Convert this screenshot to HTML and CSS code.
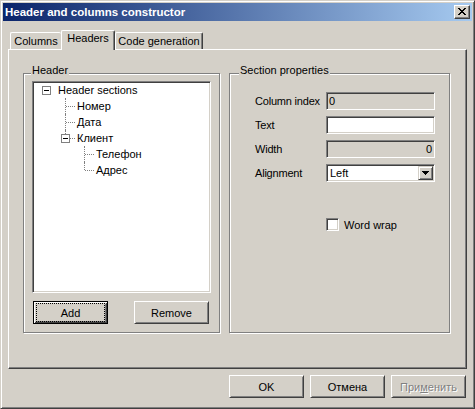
FILE: index.html
```html
<!DOCTYPE html>
<html>
<head>
<meta charset="utf-8">
<link rel="stylesheet" href="styles.css">
</head>
<body>
<div class="window">
  <div class="titlebar">
    <span class="title">Header and columns constructor</span>
    <div class="close">
      <svg width="8" height="7" viewBox="0 0 8 7" shape-rendering="crispEdges"><path d="M0 0h2v1H0zM6 0h2v1H6zM1 1h2v1H1zM5 1h2v1H5zM2 2h4v1H2zM3 3h2v1H3zM2 4h4v1H2zM1 5h2v1H1zM5 5h2v1H5zM0 6h2v1H0zM6 6h2v1H6z" fill="#000"/></svg>
    </div>
  </div>
  <div class="tabs">
    <div class="tab tab-first">Columns</div>
    <div class="tab tab-sel">Headers</div>
    <div class="tab tab-last">Code generation</div>
  </div>
  <div class="panel">
    <div class="group group-header">
      <span class="group-title">Header</span>
      <div class="tree">
        <div class="row"><span class="cell"><span class="box"></span></span><span class="label">Header sections</span></div>
        <div class="row"><span class="cell"></span><span class="cell tee"></span><span class="label">Номер</span></div>
        <div class="row"><span class="cell"></span><span class="cell tee"></span><span class="label">Дата</span></div>
        <div class="row"><span class="cell"></span><span class="cell end"><span class="box"></span></span><span class="label">Клиент</span></div>
        <div class="row"><span class="cell"></span><span class="cell"></span><span class="cell tee"></span><span class="label">Телефон</span></div>
        <div class="row"><span class="cell"></span><span class="cell"></span><span class="cell end"></span><span class="label">Адрес</span></div>
      </div>
      <div class="btnrow">
        <div class="btn btn-default"><span class="focus">Add</span></div>
        <div class="btn">Remove</div>
      </div>
    </div>
    <div class="group group-props">
      <span class="group-title">Section properties</span>
      <div class="fields">
        <span class="flabel">Column index</span>
        <div class="edit edit-disabled">0</div>
        <span class="flabel">Text</span>
        <div class="edit"></div>
        <span class="flabel">Width</span>
        <div class="edit edit-disabled edit-right">0</div>
        <span class="flabel">Alignment</span>
        <div class="combo">
          <span class="combo-text">Left</span>
          <span class="combo-btn"><svg width="7" height="4" viewBox="0 0 7 4" shape-rendering="crispEdges"><path d="M0 0h7v1H0zM1 1h5v1H1zM2 2h3v1H2zM3 3h1v1H3z" fill="#000"/></svg></span>
        </div>
      </div>
      <div class="checkrow">
        <span class="check"></span>
        <span class="checklabel">Word wrap</span>
      </div>
    </div>
  </div>
  <div class="footer">
    <div class="btn">OK</div>
    <div class="btn">Отмена</div>
    <div class="btn btn-disabled">При<u>м</u>енить</div>
  </div>
</div>
</body>
</html>
```
FILE: styles.css
```css
* { box-sizing: border-box; }
body {
  margin: 0;
  font: 11px "Liberation Sans", Arial, sans-serif;
  color: #000;
  background: #d4d0c8;
}
.window {
  width: 475px;
  height: 409px;
  border: 1px solid;
  border-color: #d4d0c8 #404040 #404040 #d4d0c8;
  box-shadow: inset 1px 1px #fff, inset -1px -1px #808080;
  padding: 2px;
  background: #d4d0c8;
  display: flex;
  flex-direction: column;
}
.titlebar {
  height: 18px;
  flex: none;
  display: flex;
  align-items: center;
  padding: 0 2px 0 2px;
  background: linear-gradient(to right, #0a246a, #a6caf0);
}
.title {
  flex: 1;
  color: #fff;
  font-weight: bold;
  font-size: 11.5px;
  white-space: nowrap;
}
.close {
  width: 16px;
  height: 14px;
  border: 1px solid;
  border-color: #fff #404040 #404040 #fff;
  box-shadow: inset -1px -1px #808080;
  background: #d4d0c8;
  display: flex;
  align-items: center;
  justify-content: center;
  padding: 0 1px 1px 0;
}
.tabs {
  flex: none;
  height: 19px;
  margin: 9px 0 0 5px;
  display: flex;
  align-items: flex-end;
}
.tab {
  height: 17px;
  border-top: 1px solid #fff;
  border-left: 1px solid #fff;
  border-right: 1px solid #404040;
  box-shadow: inset -1px 0 #808080;
  border-radius: 2px 2px 0 0;
  text-align: center;
  line-height: 13px;
  padding-top: 2px;
  white-space: nowrap;
  background: #d4d0c8;
}
.tab-first {
  width: 51px;
  margin-left: 2px;
  border-right: none;
  box-shadow: none;
}
.tab-sel {
  width: 54px;
  height: 20px;
  margin-bottom: -1px;
  padding-top: 1px;
  position: relative;
  z-index: 1;
}
.tab-last { width: 88px; }
.panel {
  flex: none;
  width: 459px;
  height: 320px;
  margin-left: 5px;
  border: 1px solid;
  border-color: #fff #404040 #404040 #fff;
  box-shadow: inset -1px -1px #808080;
  padding: 23px 0 0 14px;
  display: flex;
  gap: 9px;
  align-items: flex-start;
}
.group {
  position: relative;
  height: 260px;
  border: 1px solid #808080;
  box-shadow: inset 1px 1px #fff, 1px 1px #fff;
}
.group-header { width: 197px; }
.group-props { width: 221px; padding: 18px 0 0 25px; }
.group-title {
  position: absolute;
  top: -10px;
  left: 7px;
  padding: 0 1px;
  line-height: 13px;
  background: #d4d0c8;
  white-space: nowrap;
}
.group-props .group-title { left: 9px; }
.tree {
  width: 179px;
  height: 212px;
  margin: 7px 0 0 8px;
  background: #fff;
  border: 1px solid;
  border-color: #808080 #fff #fff #808080;
  box-shadow: inset 1px 1px #404040, inset -1px -1px #d4d0c8;
  padding: 0 0 0 4px;
}
.row {
  display: flex;
  height: 16px;
}
.cell {
  position: relative;
  flex: none;
  width: 19px;
  height: 16px;
}
.tee::before, .end::before {
  content: "";
  position: absolute;
  left: 9px;
  top: 0;
  height: 16px;
  border-left: 1px dotted #808080;
}
.end::before { height: 8px; }
.tee::after, .end::after {
  content: "";
  position: absolute;
  left: 10px;
  top: 8px;
  width: 9px;
  border-top: 1px dotted #808080;
}
.box {
  position: absolute;
  left: 5px;
  top: 4px;
  width: 9px;
  height: 9px;
  border: 1px solid #808080;
  background: #fff;
  z-index: 1;
}
.box::after {
  content: "";
  position: absolute;
  left: 1px;
  top: 3px;
  width: 5px;
  height: 1px;
  background: #000;
}
.label {
  padding-left: 2px;
  line-height: 16px;
  white-space: nowrap;
}
.btnrow {
  display: flex;
  gap: 26px;
  margin: 8px 0 0 9px;
}
.btn {
  flex: none;
  width: 75px;
  height: 23px;
  border: 1px solid;
  border-color: #fff #404040 #404040 #fff;
  box-shadow: inset 1px 1px #d4d0c8, inset -1px -1px #808080;
  display: flex;
  align-items: center;
  justify-content: center;
  white-space: nowrap;
  background: #d4d0c8;
}
.btn-default {
  border: 1px solid #000;
  box-shadow: inset 1px 1px #fff, inset -1px -1px #404040, inset 2px 2px #d4d0c8, inset -2px -2px #808080;
  padding: 1px 2px;
  align-items: stretch;
}
.focus {
  flex: 1;
  border: 1px dotted #000;
  display: flex;
  align-items: center;
  justify-content: center;
}
.btn-disabled {
  color: #808080;
  text-shadow: 1px 1px #fff;
}
.btn-disabled u { text-decoration: underline; }
.fields {
  display: grid;
  grid-template-columns: 71px 109px;
  grid-auto-rows: 18px;
  row-gap: 6px;
  align-items: center;
}
.flabel { white-space: nowrap; letter-spacing: -0.2px; }
.edit, .combo {
  height: 18px;
  background: #fff;
  border: 1px solid;
  border-color: #808080 #fff #fff #808080;
  box-shadow: inset 1px 1px #404040, inset -1px -1px #d4d0c8;
  padding: 0 2px;
  line-height: 16px;
}
.edit-disabled { background: #d4d0c8; }
.edit-right { text-align: right; }
.combo {
  display: flex;
  padding: 1px;
  line-height: 14px;
}
.combo-text { flex: 1; padding-left: 2px; }
.combo-btn {
  flex: none;
  width: 15px;
  border: 1px solid;
  border-color: #d4d0c8 #404040 #404040 #d4d0c8;
  box-shadow: inset 1px 1px #fff, inset -1px -1px #808080;
  background: #d4d0c8;
  display: flex;
  align-items: center;
  justify-content: center;
}
.checkrow {
  display: flex;
  align-items: center;
  margin: 36px 0 0 71px;
}
.check {
  width: 13px;
  height: 13px;
  background: #fff;
  border: 1px solid;
  border-color: #808080 #fff #fff #808080;
  box-shadow: inset 1px 1px #404040, inset -1px -1px #d4d0c8;
}
.checklabel { margin-left: 5px; }
.footer {
  flex: none;
  display: flex;
  justify-content: flex-end;
  gap: 6px;
  margin-top: 6px;
  padding-right: 6px;
}
```
